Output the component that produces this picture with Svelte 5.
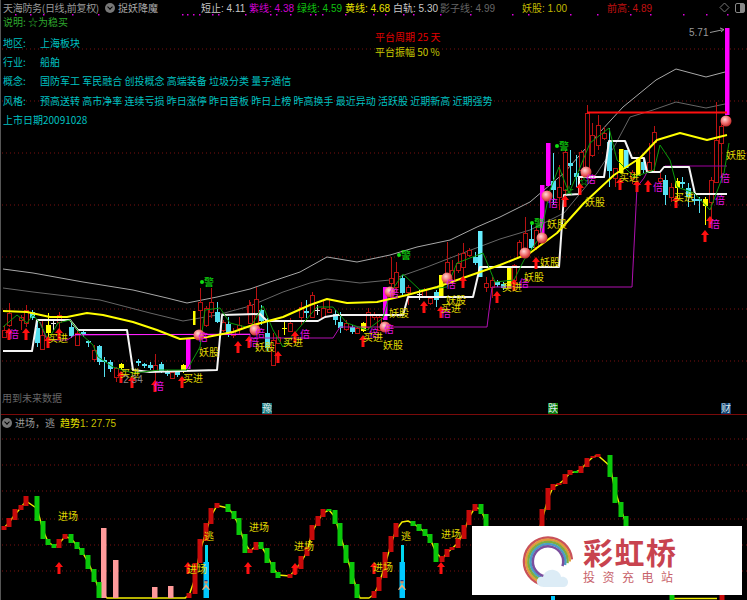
<script lang="ts">
  const legend = [
    { text: '短止: 4.11', c: 'c-white', w: 48 },
    { text: '紫线: 4.38', c: 'c-magenta', w: 48 },
    { text: '绿线: 4.59', c: 'c-green', w: 48 },
    { text: '黄线: 4.68', c: 'c-yellow', w: 48 },
    { text: '白轨: 5.30', c: 'c-white', w: 47 },
    { text: '影子线: 4.99', c: 'c-dim', w: 82 },
    { text: '妖股: 1.00', c: 'c-olive', w: 85 },
    { text: '前高: 4.89', c: 'c-red', w: 60 }
  ];
  const info = [
    { k: '地区:', v: '上海板块' },
    { k: '行业:', v: '船舶' },
    { k: '概念:', v: '国防军工 军民融合 创投概念 高端装备 垃圾分类 量子通信' },
    { k: '风格:', v: '预高送转 高市净率 连续亏损 昨日涨停 昨日首板 昨日上榜 昨高换手 最近异动 活跃股 近期新高 近期强势' }
  ];
  const topDots = [15, 30, 43, 72, 98, 182, 187, 193, 199, 212, 218, 245, 270, 276, 290, 310, 315, 322, 345, 373, 385, 403, 413, 440, 470, 512, 528, 570, 597, 630, 650, 683, 706, 727];
  const gridMain = [49, 101, 153, 205, 257, 309, 361];
  const gridSub = [438, 464, 490, 518, 544, 570];

  const upper = '3,269 33,273 83,282 133,290 167,298 187,303 217,297 250,289 270,282 300,272 327,257 357,262 390,255 417,247 450,240 477,227 500,217 530,202 564,173 600,132 623,107 656,80 676,69 706,77 725,72';
  const lower = '3,288 33,292 100,300 150,313 183,321 217,315 250,306 283,292 310,283 327,279 360,283 390,280 427,267 463,253 500,239 530,230 564,213 597,173 614,147 630,117 653,110 676,102 706,108 725,104';
  const ma = '3,311 27,312 50,317 67,317 87,313 103,315 133,322 157,330 180,339 207,337 233,332 250,326 283,317 310,305 327,299 347,303 377,302 407,295 437,287 463,278 500,265 530,253 557,233 584,203 614,175 640,158 657,140 680,133 707,140 727,135';
  const steps = '3,351 32,351 37,320 70,320 78,330 127,330 133,370 150,372 217,370 222,315 260,314 267,321 318,321 325,317 337,315 403,315 408,297 473,297 480,267 559,267 564,195 579,194 579,177 604,177 609,141 625,141 632,158 644,158 647,172';
  const stepsEnd = '647,172 660,172 664,167 689,167 695,194 727,194';
  const purple = '40,322 47,340 67,340 75,335 250,334 250,338 333,338 340,327 487,327 492,287 632,287 637,187 644,178 647,172';
  const purpleEnd = '647,172 660,172 665,166 727,166';
  const wave = '3,327 17,315 27,323 33,315 40,323 48,340 58,323 70,320 80,333 93,345 98,357 113,367 133,373 160,370 187,370 200,347 205,310 220,308 230,323 250,328 263,306 273,330 283,347 300,327 317,307 333,307 347,323 367,330 383,318 390,293 403,274 420,290 447,287 457,263 483,253 495,282 514,280 524,260 540,237 550,190 559,167 569,193 579,170 590,143 609,128 617,160 634,177 654,170 660,145 670,160 677,187 694,193 710,210 724,173 729,143';

  // x, body top, body bottom, wick top, wick bottom, kind
  type Candle = [number, number, number, number, number, string];
  const candles: Candle[] = [
    [4, 330, 337, 325, 338, 'r'], [9, 313, 325, 303, 327, 'r'], [21, 317, 320, 315, 330, 'r'], [26, 310, 323, 305, 327, 'r'],
    [32, 312, 318, 310, 320, 'c'], [37, 328, 343, 320, 347, 'c'], [42, 335, 349, 320, 350, 'r'], [48, 325, 333, 313, 340, 'y'],
    [53, 323, 324, 320, 330, 'w'], [59, 315, 322, 312, 332, 'r'], [71, 327, 336, 322, 338, 'c'], [77, 333, 345, 330, 346, 'r'],
    [83, 332, 334, 330, 337, 'c'], [88, 341, 343, 340, 347, 'c'], [94, 350, 359, 345, 362, 'r'], [99, 346, 362, 345, 365, 'c'],
    [104, 360, 362, 357, 377, 'c'], [110, 362, 369, 360, 372, 'c'], [116, 368, 377, 367, 382, 'r'], [121, 364, 368, 363, 370, 'y'],
    [138, 361, 363, 359, 366, 'c'], [144, 364, 366, 363, 368, 'c'], [150, 365, 368, 362, 370, 'c'], [155, 365, 370, 354, 382, 'r'],
    [161, 364, 371, 362, 373, 'c'], [167, 372, 374, 370, 376, 'c'], [172, 372, 378, 371, 379, 'r'], [177, 372, 375, 371, 377, 'c'],
    [183, 365, 372, 364, 373, 'y'], [200, 302, 310, 288, 330, 'r'], [206, 308, 325, 306, 327, 'r'], [211, 302, 312, 288, 318, 'r'],
    [217, 312, 322, 302, 323, 'c'], [223, 322, 330, 320, 332, 'r'], [228, 324, 333, 317, 337, 'c'], [233, 331, 335, 328, 338, 'r'],
    [239, 325, 328, 317, 335, 'r'], [249, 305, 313, 300, 320, 'r'],
    [250, 305, 323, 302, 324, 'r'], [256, 299, 327, 287, 328, 'r'], [261, 310, 321, 305, 325, 'c'], [267, 333, 348, 318, 351, 'c'],
    [273, 340, 365, 333, 365, 'r'], [278, 337, 343, 330, 343, 'r'], [284, 328, 329, 320, 335, 'y'], [290, 323, 331, 318, 332, 'r'],
    [301, 307, 317, 302, 325, 'r'], [306, 311, 313, 300, 318, 'c'], [312, 295, 317, 292, 318, 'r'], [317, 310, 311, 305, 315, 'w'],
    [323, 308, 317, 300, 318, 'r'], [329, 309, 312, 300, 313, 'r'], [335, 314, 320, 310, 325, 'c'], [340, 322, 328, 312, 333, 'c'],
    [346, 323, 329, 320, 331, 'r'], [352, 327, 332, 325, 334, 'c'], [357, 328, 333, 327, 334, 'r'], [363, 323, 331, 322, 332, 'y'],
    [368, 312, 327, 308, 330, 'r'], [374, 314, 317, 312, 320, 'r'], [379, 317, 330, 315, 331, 'r'],
    [391, 278, 283, 257, 298, 'r'], [396, 272, 287, 262, 293, 'r'], [402, 278, 293, 275, 295, 'c'], [408, 287, 292, 285, 305, 'r'],
    [419, 294, 295, 290, 300, 'w'], [424, 290, 297, 288, 298, 'r'], [430, 298, 303, 297, 305, 'r'], [436, 292, 300, 290, 307, 'c'],
    [447, 262, 273, 242, 277, 'r'], [452, 270, 280, 260, 285, 'r'], [458, 263, 270, 253, 273, 'r'], [463, 253, 267, 243, 277, 'r'],
    [469, 250, 255, 248, 257, 'r'], [475, 257, 263, 252, 265, 'c'], [486, 283, 287, 277, 292, 'r'], [492, 280, 287, 277, 298, 'r'],
    [497, 282, 285, 280, 287, 'c'], [503, 284, 288, 282, 290, 'c'],
    [514, 265, 280, 264, 282, 'r'], [519, 242, 257, 240, 257, 'r'], [525, 233, 253, 217, 253, 'r'], [531, 239, 248, 223, 250, 'c'],
    [536, 230, 247, 228, 250, 'r'], [553, 181, 190, 153, 205, 'c'], [559, 187, 197, 165, 210, 'r'], [565, 152, 190, 150, 200, 'r'],
    [570, 163, 166, 150, 185, 'c'], [576, 173, 177, 155, 187, 'c'], [581, 152, 170, 150, 180, 'r'], [587, 113, 168, 105, 170, 'r'],
    [592, 135, 155, 123, 157, 'r'], [598, 125, 145, 115, 150, 'r'], [604, 133, 138, 127, 140, 'r'], [609, 142, 171, 128, 187, 'c'],
    [615, 168, 178, 168, 187, 'r'], [632, 172, 178, 170, 184, 'r'], [643, 162, 170, 157, 173, 'c'], [649, 162, 170, 143, 173, 'r'],
    [654, 132, 142, 126, 172, 'r'], [660, 178, 181, 173, 183, 'r'], [665, 180, 195, 175, 205, 'c'], [671, 187, 197, 183, 202, 'r'],
    [677, 181, 188, 178, 200, 'y'], [682, 182, 184, 177, 188, 'c'], [688, 188, 197, 183, 207, 'c'], [694, 199, 201, 195, 205, 'c'],
    [699, 199, 201, 197, 213, 'c'], [705, 199, 206, 197, 225, 'y'], [711, 180, 202, 177, 222, 'r'], [716, 140, 182, 102, 183, 'r'],
    [721, 126, 143, 122, 177, 'r']
  ];
  // x, top, bottom, fill
  const fatBars: [number, number, number, string][] = [
    [188, 339, 369, '#ff00ff'], [385, 287, 320, '#ff00ff'], [542, 185, 233, '#ff00ff'], [548, 143, 186, '#ff00ff'], [727, 28, 115, '#ff00ff'],
    [441, 275, 298, '#ffff00'], [509, 267, 288, '#ffff00'], [621, 149, 173, '#ffff00'], [638, 158, 176, '#ffff00'],
    [480, 231, 277, '#66eeff'], [626, 150, 168, '#66eeff']
  ];
  const balls = [[199, 335], [255, 330], [385, 327], [390, 292], [447, 278], [525, 253], [542, 238], [547, 196], [586, 172], [726, 121]];
  const arrows = [[9, 334], [26, 334], [48, 342], [59, 334], [121, 377], [132, 382], [155, 386], [182, 382], [238, 347], [249, 342], [278, 357], [295, 337], [363, 341], [424, 307], [441, 312], [463, 282], [497, 297], [514, 285], [536, 263], [565, 201], [580, 189], [620, 184], [637, 186], [648, 186], [676, 202], [705, 236], [710, 222]];
  const bei = [[14, 334], [159, 386], [203, 337], [254, 342], [260, 333], [305, 334], [394, 293], [389, 329], [374, 333], [451, 284], [446, 313], [524, 283], [553, 203], [591, 179], [658, 187], [720, 200], [725, 178], [715, 224]];
  const buy = [[58, 338], [130, 373], [193, 378], [293, 342], [373, 337], [451, 308], [629, 177], [684, 197], [512, 287]];
  const demon = [[209, 352], [265, 347], [399, 313], [393, 345], [456, 300], [534, 277], [550, 262], [557, 224], [595, 202], [736, 155]];
  const warns = [[209, 281], [406, 254], [564, 145], [539, 222]];
  const stars = [[569, 194], [584, 185]];

  // x, top, bottom, rising
  type Block = [number, number, number, boolean];
  const blocks: Block[] = [
    [4, 525, 529, true], [9, 517, 526, true], [15, 508, 519, true], [21, 504, 509, true], [26, 495, 505, true],
    [37, 495, 520, false], [43, 520, 538, false], [48, 538, 544, false], [54, 543, 547, false], [59, 538, 547, true], [65, 533, 538, true],
    [71, 533, 542, false], [77, 541, 548, false], [82, 547, 554, false], [88, 554, 568, false], [94, 568, 581, false], [99, 581, 597, false],
    [189, 592, 597, true], [195, 562, 593, true], [200, 538, 562, true], [206, 522, 540, true], [211, 507, 523, true], [217, 502, 507, true],
    [228, 503, 511, false], [234, 510, 518, false], [239, 517, 534, false], [245, 533, 552, false], [250, 548, 552, true],
    [256, 541, 549, true], [261, 541, 548, false], [267, 547, 562, false], [273, 561, 572, false], [278, 571, 577, false],
    [290, 573, 577, true], [295, 565, 573, true], [301, 555, 568, true], [307, 546, 555, true], [312, 524, 539, true], [318, 515, 525, true], [323, 508, 516, true],
    [329, 508, 510, false], [335, 509, 523, false], [340, 522, 545, false], [346, 544, 562, false], [352, 561, 583, false], [357, 583, 597, false],
    [374, 590, 597, true], [379, 576, 590, true], [385, 551, 577, true], [391, 535, 551, true], [396, 522, 536, true],
    [413, 520, 525, false], [419, 523, 530, false], [425, 528, 535, false], [430, 533, 542, false], [436, 542, 561, false],
    [442, 555, 561, true], [447, 548, 556, true], [452, 546, 549, true], [458, 537, 547, true], [464, 524, 538, true], [469, 509, 524, true], [475, 503, 510, true],
    [481, 503, 513, false], [486, 513, 530, false],
    [542, 508, 530, true], [548, 487, 509, true], [553, 483, 489, true], [559, 482, 484, true], [565, 473, 483, true], [570, 469, 474, true],
    [576, 470, 472, false], [581, 465, 472, true], [587, 457, 466, true], [593, 455, 457, true], [598, 453, 456, true],
    [610, 454, 476, false], [615, 476, 502, false], [621, 501, 516, false], [626, 515, 530, false],
    [672, 593, 600, false], [722, 593, 600, true]
  ];
  const mid = (list: Block[]) => list.map((b) => `${b[0]},${(b[1] + b[2]) / 2}`);
  const curve = [
    ...mid(blocks.slice(0, 17)), '107,597', '185,597',
    ...mid(blocks.slice(17, 46)), '360,597', '369,597',
    ...mid(blocks.slice(46, 51)), '402,521', '408,520',
    ...mid(blocks.slice(51, 65)), '495,560', '530,560',
    ...mid(blocks.slice(65, 80)), '632,560'
  ].join(' ');
  const pinks = [[104, 527], [116, 559], [155, 586], [171, 585]];
  const subArrows = [[59, 567], [188, 567], [248, 567], [295, 568], [374, 567], [441, 567]];
  const enter = [[68, 515], [197, 568], [259, 526], [304, 545], [383, 566], [451, 533]];
  const escapes = [[209, 535], [406, 535]];
  const runners = [206, 402];

  // rainbow bands: open at the lower right, hidden at the bottom by the cloud
  function arc(r: number, from: number, to: number) {
    const cx = 26;
    const cy = 30.5;
    const pt = (deg: number) => {
      const a = (deg * Math.PI) / 180;
      return `${(cx + r * Math.cos(a)).toFixed(1)} ${(cy + r * Math.sin(a)).toFixed(1)}`;
    };
    return `M${pt(from)}A${r} ${r} 0 1 0 ${pt(to)}`;
  }
  const bands = [
    { r: 24, c: '#c9525a', from: -5 },
    { r: 21.8, c: '#e39a3c', from: 0 },
    { r: 19.6, c: '#7fae3e', from: 5 },
    { r: 17.4, c: '#4a9fc4', from: 12 },
    { r: 15.2, c: '#7a4f9e', from: 18 }
  ];
</script>

<div class="screen">
  <section class="main-pane">
    <svg class="canvas" width="747" height="414" viewBox="0 0 747 414">
      {#each gridMain as y}
        <line class="grid" x1="2" x2="747" y1={y} y2={y} />
      {/each}
      {#each topDots as x}
        <rect x={x} y="14" width="1.5" height="1.5" fill="#e000e0" />
      {/each}
      <polyline class="line" points={upper} stroke="#a8a8a8" />
      <polyline class="line" points={lower} stroke="#666" />
      {#each candles as [x, top, bottom, wickTop, wickBottom, kind]}
        {@const col = kind === 'r' ? '#b81212' : kind === 'c' ? '#55e0f0' : kind === 'y' ? '#ffff00' : '#e8e8e8'}
        <line x1={x + 0.5} x2={x + 0.5} y1={wickTop} y2={wickBottom} stroke={col} />
        {#if kind === 'r'}
          <rect x={x - 1.5} y={top + 0.5} width="4" height={bottom - top} fill="#000" stroke={col} />
        {:else}
          <rect x={x - 2} y={top} width="5" height={Math.max(bottom - top, 1)} fill={col} />
        {/if}
      {/each}
      <rect x="193" y="311" width="2.5" height="14" fill="#ffff00" />
      {#each fatBars as [x, top, bottom, fill]}
        <rect x={x - 2} y={top} width="4.5" height={bottom - top} fill={fill} />
      {/each}
      <polyline class="line" points={purple} stroke="#b010b0" />
      <line x1="75" x2="250" y1="334.5" y2="334.5" stroke="#ff20ff" />
      <polyline class="line" points={purpleEnd} stroke="#a000a0" />
      <polyline class="line heavy" points={steps} stroke="#f4f4f4" />
      <polyline class="line heavy" points={stepsEnd} stroke="#f4f4f4" />
      <polyline class="line" points={wave} stroke="#0a9a0a" />
      <polyline class="line thick" points={ma} stroke="#ffff00" />
      <line x1="587" x2="727" y1="112.5" y2="112.5" stroke="#ff1010" stroke-width="2" />
      {#each stars as [x, y]}
        <text class="tag star" x={x} y={y} text-anchor="middle">☆</text>
      {/each}
      {#each balls as [cx, cy]}
        <circle cx={cx} cy={cy} r="5.5" fill="url(#ball)" />
      {/each}
      {#each arrows as [x, y]}
        <path d="M{x} {y - 6}l4 5h-2.5v7h-3v-7h-2.5z" fill="#ff1010" />
      {/each}
      {#each bei as [x, y]}
        <text class="tag bei" x={x} y={y + 4} text-anchor="middle">倍</text>
      {/each}
      {#each buy as [x, y]}
        <text class="tag buy" x={x} y={y + 4} text-anchor="middle">买进</text>
      {/each}
      {#each demon as [x, y]}
        <text class="tag buy" x={x} y={y + 4} text-anchor="middle">妖股</text>
      {/each}
      {#each warns as [x, y]}
        <circle cx={x - 7} cy={y + 1} r="2" fill="#10e010" />
        <text class="tag warn" x={x} y={y + 5} text-anchor="middle">警</text>
      {/each}
      <text class="tag dim" x="133" y="383" text-anchor="middle">2 34</text>
      <text class="tag num" x="689" y="36">5.71</text>
      <path d="M710 32.500l14-3m-4-1.500l4 1.500-3 2.500" stroke="#999" fill="none" />
      <text class="tag plat-red" x="375" y="41">平台周期 25 天</text>
      <text class="tag plat-yellow" x="375" y="56">平台振幅 50 %</text>
      <text class="tag note" x="2" y="402">用到未来数据</text>
      <rect x="262" y="403" width="10" height="11" fill="#0f6f74" />
      <text class="tag box" x="267" y="412" text-anchor="middle">豫</text>
      <rect x="548" y="403" width="10" height="11" fill="#0a7a0a" />
      <text class="tag box" x="553" y="412" text-anchor="middle">跌</text>
      <rect x="721" y="403" width="10" height="11" fill="#0f3c6e" />
      <text class="tag box" x="726" y="412" text-anchor="middle">财</text>
      <defs>
        <radialGradient id="ball" cx="0.4" cy="0.35" r="0.7">
          <stop offset="0" stop-color="#ffd8d8" />
          <stop offset="0.55" stop-color="#f06a6a" />
          <stop offset="1" stop-color="#b82020" />
        </radialGradient>
      </defs>
    </svg>

    <header class="bar">
      <span class="name">天海防务(日线,前复权)</span>
      <span class="chev"></span>
      <span class="formula">捉妖降魔</span>
      <div class="legend">
        {#each legend as item}
          <span class={item.c} style="width:{item.w}px">{item.text}</span>
        {/each}
      </div>
      <div class="tools">
        <svg width="11" height="11" viewBox="0 0 11 11"><path d="M5.500 1l4.500 4.500-4.500 4.500-4.500-4.500z" fill="none" stroke="#777" /></svg>
        <svg width="10" height="10" viewBox="0 0 10 10"><rect x="0.500" y="0.500" width="9" height="9" rx="1.500" fill="none" stroke="#888" /><rect x="5" y="1" width="4" height="8" fill="#888" /></svg>
      </div>
    </header>

    <div class="info">
      <div class="tip">说明: ☆为稳买</div>
      {#each info as row}
        <div class="row"><span class="k">{row.k}</span><span>{row.v}</span></div>
      {/each}
      <div class="row">上市日期20091028</div>
    </div>
  </section>

  <section class="sub-pane">
    <svg class="canvas" width="747" height="186" viewBox="0 414 747 186">
      {#each gridSub as y}
        <line class="grid" x1="2" x2="747" y1={y} y2={y} />
      {/each}
      <polyline class="line mid" points={curve} stroke="#f4ee00" />
      <line x1="674" x2="717" y1="597.500" y2="597.500" stroke="#f4ee00" stroke-width="1.500" />
      {#each pinks as [x, top]}
        <rect x={x - 3} y={top} width="5.500" height={597 - top} fill="#ff9a9a" />
      {/each}
      {#each blocks as [x, top, bottom, rising]}
        <rect x={x - 2.5} y={top} width="5" height={bottom - top} fill={rising ? '#c80a0a' : '#0ac80a'} />
      {/each}
      {#each runners as x}
        <rect x={x - 1} y="544" width="3" height="17" fill="#00d8f0" />
        <rect x={x - 2.500} y="561" width="5.500" height="36" fill="#00c8ff" />
        <g transform="translate({x} 585)">
          <circle cx="0" cy="-4" r="1.800" fill="#d8905a" />
          <path d="M-1.500-4.800h3v-1.200h-3z" fill="#1040a0" />
          <path d="M0-2l4 5.500-1 .5-3-3-3 3-1-.5z" fill="#eab07a" />
        </g>
      {/each}
      <rect x="551" y="595" width="4" height="5" fill="#00c8ff" />
      {#each subArrows as [x, y]}
        <path d="M{x} {y - 6}l4 5h-2.500v7h-3v-7h-2.500z" fill="#ff1010" />
      {/each}
      {#each enter as [x, y]}
        <text class="tag buy" x={x} y={y + 4} text-anchor="middle">进场</text>
      {/each}
      {#each escapes as [x, y]}
        <text class="tag buy" x={x} y={y + 4} text-anchor="middle">逃</text>
      {/each}
    </svg>

    <header class="bar sub-bar">
      <span class="chev first"></span>
      <span class="name">进场，逃</span>
      <span class="trend"><b>趋势</b>1: 27.75</span>
    </header>

    <aside class="mark">
      <svg width="60" height="60" viewBox="0 0 60 60">
        <g fill="none" stroke-width="2.500">
          {#each bands as b}
            <path d={arc(b.r, b.from, 100)} stroke={b.c} />
          {/each}
        </g>
        <path d="M22 56c-5 0-8-3-7-7 1-3 4-4 6-3 1-5 6-8 11-7 4 1 7 4 7 7 4-1 7 2 7 5 0 3-2 5-5 5z" fill="#dcecf6" />
      </svg>
      <div class="brand">
        <div class="brand-name">彩虹桥</div>
        <div class="brand-sub">投资充电站</div>
      </div>
    </aside>
  </section>
</div>

<style>
  :global(body) {
    margin: 0;
    background: #000;
  }
  .screen {
    width: 747px;
    height: 600px;
    display: flex;
    flex-direction: column;
    background: #000;
    overflow: hidden;
    font-family: "Noto Sans CJK SC", "Liberation Sans", sans-serif;
    font-size: 10px;
    border-left: 1px solid #555;
    box-sizing: border-box;
  }
  .main-pane {
    position: relative;
    height: 415px;
    flex: none;
    border-bottom: 1px solid #7a0a0a;
    box-sizing: border-box;
  }
  .sub-pane {
    position: relative;
    flex: 1;
  }
  .canvas {
    position: absolute;
    left: -1px;
    top: 0;
    display: block;
  }
  .grid {
    stroke: #7a1010;
    stroke-width: 1;
    stroke-dasharray: 1 3;
  }
  .line {
    fill: none;
    stroke-width: 1;
    stroke-linejoin: round;
  }
  .line.heavy {
    stroke-width: 2;
  }
  .line.thick {
    stroke-width: 2;
  }
  .line.mid {
    stroke-width: 1.5;
  }
  .tag {
    font-family: "Noto Sans CJK SC", sans-serif;
    font-size: 10px;
  }
  .bei {
    fill: #e010e0;
  }
  .buy {
    fill: #e0da00;
  }
  .warn {
    fill: #10e010;
  }
  .star {
    fill: #10c010;
  }
  .dim {
    fill: #888;
    font-family: "Liberation Sans", sans-serif;
  }
  .num {
    fill: #999;
    font-family: "Liberation Sans", sans-serif;
  }
  .plat-red {
    fill: #e00000;
  }
  .plat-yellow {
    fill: #c8c800;
  }
  .note {
    fill: #666;
  }
  .box {
    fill: #d8e8e8;
  }
  .bar {
    position: relative;
    height: 15px;
    display: flex;
    align-items: center;
    white-space: nowrap;
    padding-left: 2px;
  }
  .name {
    color: #999;
    width: 102px;
    letter-spacing: -0.3px;
  }
  .chev {
    width: 10px;
    height: 10px;
    border-radius: 50%;
    background: #777;
    position: relative;
    flex: none;
  }
  .chev::after {
    content: "";
    position: absolute;
    left: 3px;
    top: 2px;
    width: 3px;
    height: 3px;
    border-right: 1.5px solid #000;
    border-bottom: 1.5px solid #000;
    transform: rotate(45deg);
  }
  .formula {
    color: #aaa;
    margin-left: 3px;
    width: 83px;
  }
  .legend {
    display: flex;
    font-family: "Liberation Sans", "Noto Sans CJK SC", sans-serif;
    font-size: 10px;
  }
  .legend span {
    display: block;
    white-space: nowrap;
  }
  .c-white {
    color: #c8c8c8;
  }
  .c-magenta {
    color: #d000d0;
  }
  .c-green {
    color: #10c010;
  }
  .c-yellow {
    color: #e6e000;
  }
  .c-dim {
    color: #666;
  }
  .c-olive {
    color: #c0b800;
  }
  .c-red {
    color: #c01010;
  }
  .tools {
    position: absolute;
    right: 2px;
    top: 2px;
    display: flex;
    gap: 5px;
    align-items: center;
  }
  .info {
    position: relative;
    padding-left: 2px;
    display: flex;
    flex-direction: column;
  }
  .tip {
    color: #2ea82e;
    height: 18.5px;
    line-height: 14px;
  }
  .row {
    color: #00c0c0;
    height: 19.4px;
    line-height: 17px;
    display: flex;
    white-space: nowrap;
  }
  .k {
    width: 37px;
    flex: none;
  }
  .sub-bar {
    padding-left: 1px;
    height: 15px;
  }
  .sub-bar .name {
    width: auto;
    margin-left: 3px;
    letter-spacing: 0;
  }
  .trend {
    color: #c8c000;
    margin-left: 5px;
    font-family: "Liberation Sans", "Noto Sans CJK SC", sans-serif;
  }
  .trend b {
    font-weight: 400;
    color: #e6e000;
  }
  .mark {
    position: absolute;
    left: 471px;
    top: 111px;
    width: 270px;
    height: 69px;
    background: #fff;
    display: flex;
    align-items: center;
    padding-left: 50px;
    box-sizing: border-box;
    gap: 1px;
  }
  .brand {
    display: flex;
    flex-direction: column;
    align-items: flex-start;
  }
  .brand-name {
    color: #c8434f;
    font-size: 30px;
    font-weight: 700;
    line-height: 30px;
    letter-spacing: 1.5px;
  }
  .brand-sub {
    color: #c8636b;
    font-size: 12px;
    line-height: 16px;
    margin-top: 3px;
    letter-spacing: 7.5px;
  }
</style>
